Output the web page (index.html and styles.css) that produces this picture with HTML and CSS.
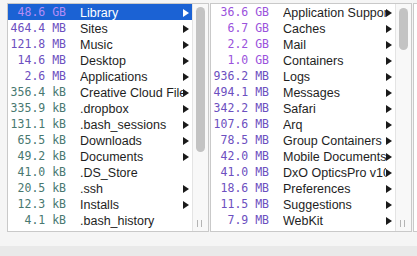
FILE: index.html
```html
<!DOCTYPE html>
<html>
<head>
<meta charset="utf-8">
<link rel="stylesheet" href="styles.css">
</head>
<body>
<div class="pane">
  <div class="column">
    <div class="list">
      <div class="row selected"><span class="size gb">48.6 GB</span><span class="name">Library</span><span class="arrow"></span></div>
      <div class="row"><span class="size mb">464.4 MB</span><span class="name">Sites</span><span class="arrow"></span></div>
      <div class="row"><span class="size mb">121.8 MB</span><span class="name">Music</span><span class="arrow"></span></div>
      <div class="row"><span class="size mb">14.6 MB</span><span class="name">Desktop</span><span class="arrow"></span></div>
      <div class="row"><span class="size mb">2.6 MB</span><span class="name">Applications</span><span class="arrow"></span></div>
      <div class="row"><span class="size kb">356.4 kB</span><span class="name">Creative Cloud Files</span><span class="arrow"></span></div>
      <div class="row"><span class="size kb">335.9 kB</span><span class="name">.dropbox</span><span class="arrow"></span></div>
      <div class="row"><span class="size kb">131.1 kB</span><span class="name">.bash_sessions</span><span class="arrow"></span></div>
      <div class="row"><span class="size kb">65.5 kB</span><span class="name">Downloads</span><span class="arrow"></span></div>
      <div class="row"><span class="size kb">49.2 kB</span><span class="name">Documents</span><span class="arrow"></span></div>
      <div class="row"><span class="size kb">41.0 kB</span><span class="name">.DS_Store</span><span class="noarrow"></span></div>
      <div class="row"><span class="size kb">20.5 kB</span><span class="name">.ssh</span><span class="arrow"></span></div>
      <div class="row"><span class="size kb">12.3 kB</span><span class="name">Installs</span><span class="arrow"></span></div>
      <div class="row"><span class="size kb">4.1 kB</span><span class="name">.bash_history</span><span class="noarrow"></span></div>
    </div>
    <div class="scrollbar">
      <div class="thumb thumb-long"></div>
      <div class="grip"><span></span><span></span></div>
    </div>
  </div>
  <div class="column">
    <div class="list">
      <div class="row"><span class="size gb">36.6 GB</span><span class="name">Application Support</span><span class="arrow"></span></div>
      <div class="row"><span class="size gb">6.7 GB</span><span class="name">Caches</span><span class="arrow"></span></div>
      <div class="row"><span class="size gb">2.2 GB</span><span class="name">Mail</span><span class="arrow"></span></div>
      <div class="row"><span class="size gb">1.0 GB</span><span class="name">Containers</span><span class="arrow"></span></div>
      <div class="row"><span class="size mb">936.2 MB</span><span class="name">Logs</span><span class="arrow"></span></div>
      <div class="row"><span class="size mb">494.1 MB</span><span class="name">Messages</span><span class="arrow"></span></div>
      <div class="row"><span class="size mb">342.2 MB</span><span class="name">Safari</span><span class="arrow"></span></div>
      <div class="row"><span class="size mb">107.6 MB</span><span class="name">Arq</span><span class="arrow"></span></div>
      <div class="row"><span class="size mb">78.5 MB</span><span class="name">Group Containers</span><span class="arrow"></span></div>
      <div class="row"><span class="size mb">42.0 MB</span><span class="name">Mobile Documents</span><span class="arrow"></span></div>
      <div class="row"><span class="size mb">41.0 MB</span><span class="name">DxO OpticsPro v10</span><span class="arrow"></span></div>
      <div class="row"><span class="size mb">18.6 MB</span><span class="name">Preferences</span><span class="arrow"></span></div>
      <div class="row"><span class="size mb">11.5 MB</span><span class="name">Suggestions</span><span class="arrow"></span></div>
      <div class="row"><span class="size mb">7.9 MB</span><span class="name">WebKit</span><span class="arrow"></span></div>
      <div class="row"><span class="size mb">6.4 MB</span><span class="name">Keychains</span><span class="arrow"></span></div>
    </div>
    <div class="scrollbar">
      <div class="thumb thumb-short"></div>
      <div class="grip"><span></span><span></span></div>
    </div>
  </div>
  <div class="column column-partial"></div>
</div>
<div class="statusbar"></div>
</body>
</html>
```

FILE: styles.css
```css
html, body {
  margin: 0;
  padding: 0;
  overflow: hidden;
}
body {
  width: 417px;
  height: 256px;
  background: #e9e9e9;
  font-family: "Liberation Sans", Arial, sans-serif;
}
.pane {
  display: flex;
  gap: 1px;
  padding: 3px 0 14px 7px;
  background: #f5f5f5;
  overflow: hidden;
}
.column {
  display: flex;
  flex: none;
  width: 200px;
  height: 227px;
  border: 1px solid #c9c9c9;
  background: #ffffff;
}
.column-partial {
  width: 200px;
}
.list {
  width: 184px;
  overflow: hidden;
}
.row {
  display: flex;
  align-items: center;
  height: 16px;
  color: #1e1e1e;
}
.row.selected {
  background: #1b62d4;
  color: #ffffff;
}
.size {
  flex: none;
  width: 58px;
  text-align: right;
  font-family: "DejaVu Sans Mono", "Liberation Mono", monospace;
  font-size: 11.5px;
  line-height: 16px;
}
.gb { color: #9a52dc; }
.mb { color: #6c4fc0; }
.kb { color: #487870; }
.selected .gb { color: #b58cf5; }
.name {
  flex: none;
  width: 103px;
  margin-left: 14px;
  font-size: 12.5px;
  line-height: 16px;
  white-space: nowrap;
  overflow: hidden;
  padding-top: 1px;
}
.arrow {
  flex: none;
  width: 0;
  height: 0;
  border-left: 6px solid #1a1a1a;
  border-top: 4px solid transparent;
  border-bottom: 4px solid transparent;
  margin-top: 2px;
}
.selected .arrow {
  border-left-color: #ffffff;
}
.noarrow {
  flex: none;
  width: 6px;
}
.scrollbar {
  flex: none;
  width: 15px;
  border-left: 1px solid #e4e4e4;
  background: #f8f8f8;
  display: flex;
  flex-direction: column;
}
.thumb {
  margin: 3px 0 0 3px;
  width: 9px;
  border-radius: 5px;
  background: #c3c3c3;
}
.thumb-long { height: 145px; }
.thumb-short { height: 42px; margin-top: 4px; }
.grip {
  margin-top: auto;
  margin-bottom: 4px;
  margin-left: 4px;
  display: flex;
  gap: 3px;
  height: 7px;
}
.grip span {
  width: 1px;
  height: 7px;
  background: #b4b4b4;
}
.statusbar {
  height: 10px;
  background: #e9e9e9;
}
```
